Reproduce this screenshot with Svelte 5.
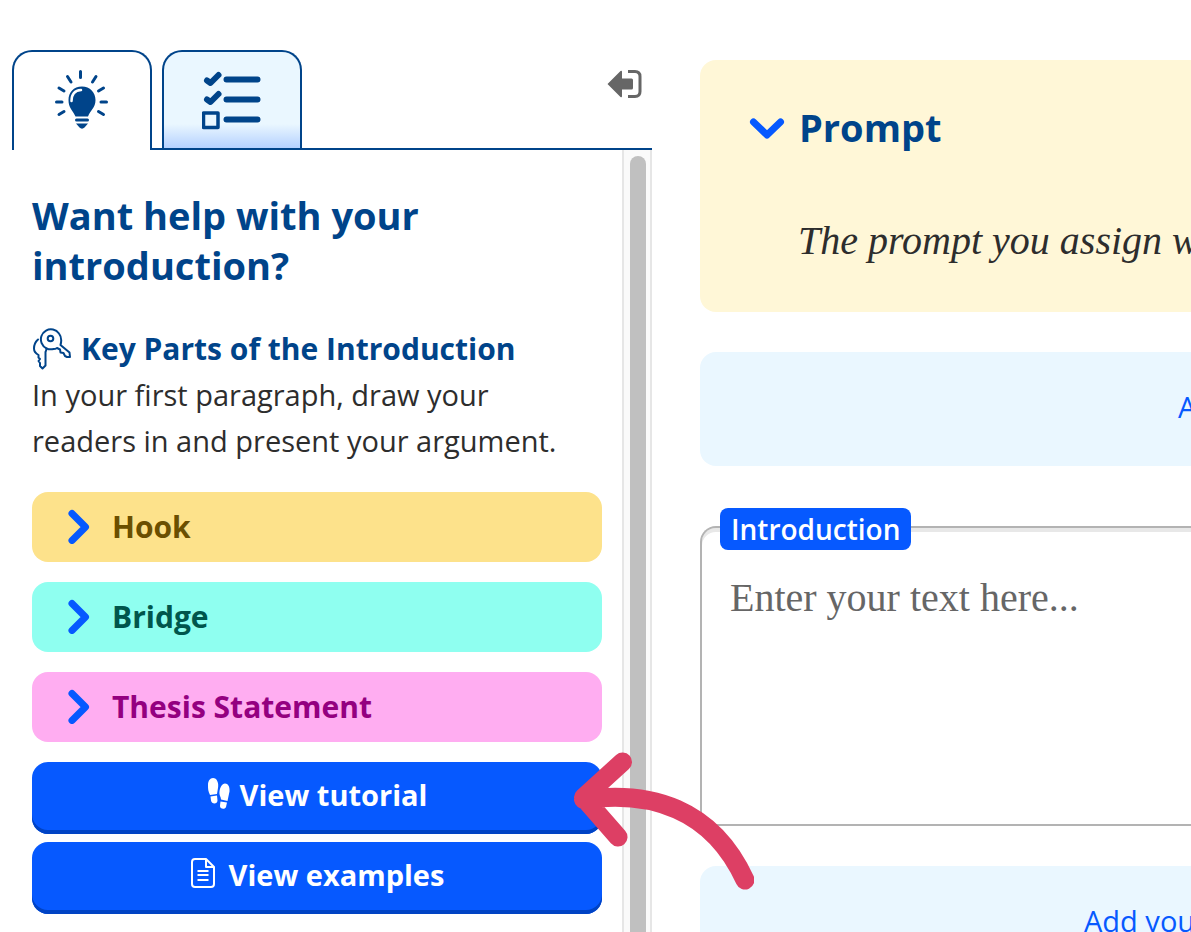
<script>
    let activeTab = $state("help");
    let text = $state("");

    // the key parts listed in the help tab
    const parts = [
        { name: "Hook", color: "hook" },
        { name: "Bridge", color: "bridge" },
        { name: "Thesis Statement", color: "thesis" },
    ];
</script>

<div class="page">
    <aside class="sidebar">
        <div class="tabs">
            <button class="tab" class:active={activeTab === "help"} aria-label="Help" onclick={() => (activeTab = "help")}>
                <svg width="56" height="62" viewBox="0 0 56 62" fill="none" stroke="#00448a" stroke-width="3" stroke-linecap="round">
                    <path d="M26.500 1.500v6M13.500 6.500l3.500 5.500M42 6.500l-3.500 5.500M5 18l5 3M49.500 18l-5 3M2.500 32h5.500M47 32h5.500M5 44.500l5-3M49.500 44.500l-5-3" />
                    <path d="M28 16.500c-8.500 0-13.500 6-13.500 13.500 0 8 4 10 7 16.500h12.500c2.500-6.500 7.500-8.500 7.500-16.500 0-7.500-5.500-13.500-13.500-13.500z" fill="#00448a" stroke="none" />
                    <path d="M17.500 31c0-6.500 3-10.500 9.500-11" stroke="#fff" stroke-width="2.500" />
                    <path d="M22.500 50h11" />
                    <path d="M22 53.500h12l-3.500 4c-1.500 1.500-3.500 1.500-5 0z" fill="#00448a" stroke="none" />
                </svg>
            </button>
            <div class="tabs-rest">
                <button class="tab" class:active={activeTab === "checklist"} aria-label="Checklist" onclick={() => (activeTab = "checklist")}>
                    <svg width="60" height="60" viewBox="0 0 60 60" fill="none" stroke="#00448a" stroke-width="6" stroke-linecap="round">
                        <path d="M24.500 9.500h31M24.500 29.500h31M24.500 49.500h31" />
                        <path d="M5 10.500l3.500 2.500 8-8M5 29.500l3.500 2.500 8-8" stroke-linejoin="round" />
                        <rect x="1.500" y="43" width="14.500" height="14.500" stroke-width="3.500" stroke-linejoin="round" />
                    </svg>
                </button>
                <button class="collapse" aria-label="Close sidebar">
                    <svg width="36" height="30" viewBox="0 0 36 30">
                        <path d="M0.500 15L13.500 2Q15 1 15 3V9.500h9.500q1.500 0 1.500 1.500v8q0 1.500-1.500 1.500H15V27q0 2-1.500 1z" fill="#666" />
                        <path d="M21 2.500h7q5 0 5 5v15q0 5-5 5h-7" fill="none" stroke="#666" stroke-width="3" />
                    </svg>
                </button>
            </div>
        </div>

        <div class="panel">
            <div class="help">
                <h1>Want help with your introduction?</h1>
                <h2>
                    <svg width="40" height="42" viewBox="0 0 40 42" fill="none" stroke="#00448a" stroke-width="2" stroke-linejoin="round" stroke-linecap="round">
                        <path d="M28.500 17q2-7-1.500-11.500a10 10 0 1 0-5.500 15.500q2 0 3.500-1l3 1.500.5 3 3 .5 1.500 3 2 1h3l-.5-4.500z" />
                        <circle cx="18.500" cy="10.500" r="2.800" />
                        <path d="M6 11.500q-4 3.500-4 9 0 4 4.500 6.500v2.500l1.500 1.500-1.500 2 1.500 2v3l2.500 2.500 3-3V24q1-2 1-3.500" />
                    </svg>
                    Key Parts of the Introduction
                </h2>
                <p>In your first paragraph, draw your readers in and present your argument.</p>

                <div class="parts">
                    {#each parts as part}
                        <button class="part {part.color}">
                            <svg width="24" height="36" viewBox="0 0 24 36" fill="none" stroke="#0659ff" stroke-width="7" stroke-linecap="round" stroke-linejoin="round">
                                <path d="M4 5.500L17.500 19 4 32.500" />
                            </svg>
                            {part.name}
                        </button>
                    {/each}
                </div>

                <div class="actions">
                    <button class="action">
                        <svg width="24" height="32" viewBox="0 0 24 32" fill="#fff">
                            <path d="M6 0c4 0 6 5 5 10l-1 6-7 1C1 13 1 11 1 7c0-4 2-7 5-7zM3.500 18.500l6.500-1 .5 5c0 4-6 4-6.500 0zM18 5.500c3 0 5 3 4.500 8L20.500 23 14 21.500c0-3-2-4-1.500-8 .5-4 2.500-8 5.500-8zM13.500 23.500l6.500 1-1 4.500c-1 3-6.500 2-6-1.500z" />
                        </svg>
                        View tutorial
                    </button>
                    <button class="action">
                        <svg class="doc" width="26" height="32" viewBox="0 0 26 32" fill="none" stroke="#fff" stroke-width="2">
                            <path d="M16 1H5Q2 1 2 4v22q0 3 3 3h16q3 0 3-3V9zM16 1v8h8M7.500 13h11M7.500 17h11M7.500 22h11" stroke-linejoin="round" />
                        </svg>
                        View examples
                    </button>
                </div>
            </div>
            <div class="scrollbar"><div class="thumb"></div></div>
        </div>
    </aside>

    <main>
        <section class="prompt">
            <h1>
                <svg width="36" height="24" viewBox="0 0 36 24" fill="none" stroke="#0659ff" stroke-width="7" stroke-linecap="round" stroke-linejoin="round">
                    <path d="M4.500 7L18 20 31.500 7" />
                </svg>
                Prompt
            </h1>
            <p>The prompt you assign will</p>
        </section>

        <button class="add late">Add</button>

        <div class="editor">
            <label for="introduction">Introduction</label>
            <textarea id="introduction" placeholder="Enter your text here..." bind:value={text}></textarea>
        </div>

        <button class="add">Add your</button>
    </main>

    <!-- pointer to the tutorial button -->
    <svg class="arrow" width="184" height="140" viewBox="0 0 184 140" fill="none" stroke="#dd3f64" stroke-width="19" stroke-linecap="round" stroke-linejoin="round">
        <path d="M52.500 12L13.500 47.500 48 87M13.500 49.500C80 40 142 58 175 130" />
    </svg>
</div>

<style>
    :global(body) {
        margin: 0;
        overflow: hidden;
        background: #fff;
    }

    .page {
        position: relative;
        display: flex;
        gap: 48px;
        height: 100vh;
        padding-left: 12px;
        box-sizing: border-box;
        overflow: hidden;
        font-family: "Open Sans", "Noto Sans", sans-serif;
        color: #2d2d2d;
    }

    button {
        font: inherit;
        border: 0;
        padding: 0;
        cursor: pointer;
    }

    h1,
    h2,
    p {
        margin: 0;
    }

    h1,
    h2 {
        color: #00448a;
        font-weight: 700;
    }

    svg {
        flex: none;
    }

    .sidebar {
        flex: 0 0 640px;
        display: flex;
        flex-direction: column;
        padding-top: 50px;
        box-sizing: border-box;
    }

    .tabs {
        display: flex;
        height: 100px;
    }

    .tabs-rest {
        flex: 1;
        display: flex;
        justify-content: space-between;
        padding-left: 10px;
        border-bottom: 2px solid #00448a;
    }

    .tab {
        width: 140px;
        box-sizing: border-box;
        display: flex;
        align-items: center;
        justify-content: center;
        border: 2px solid #00448a;
        border-bottom: 0;
        border-radius: 20px 20px 0 0;
        background: linear-gradient(#eaf7ff 75%, #b5d1ff);
    }

    .tab.active {
        background: #fff;
    }

    .collapse {
        align-self: center;
        width: 36px;
        height: 30px;
        margin: 0 9px 30px 0;
        background: none;
    }

    .collapse svg {
        display: block;
    }

    .panel {
        flex: 1;
        min-height: 0;
        display: flex;
    }

    .help {
        flex: 1;
        padding: 40px 20px 0;
        overflow: hidden;
    }

    .help h1 {
        font-size: 38px;
        line-height: 50px;
    }

    .help h2 {
        display: flex;
        align-items: center;
        gap: 9px;
        margin-top: 36px;
        font-size: 30px;
        line-height: 46px;
        white-space: nowrap;
    }

    .help p {
        padding-right: 20px;
        font-size: 29px;
        line-height: 46px;
    }

    .parts {
        display: flex;
        flex-direction: column;
        gap: 20px;
        margin-top: 28px;
    }

    .part {
        display: flex;
        align-items: center;
        gap: 20px;
        height: 70px;
        padding: 0 0 2px 36px;
        border-radius: 16px;
        font-size: 30px;
        font-weight: 700;
    }

    .hook {
        background: #fde28b;
        color: #6b4f00;
    }

    .bridge {
        background: #8ffff0;
        color: #00564c;
    }

    .thesis {
        background: #ffadf1;
        color: #940080;
    }

    .actions {
        display: flex;
        flex-direction: column;
        gap: 8px;
        margin-top: 20px;
    }

    .action {
        display: flex;
        align-items: center;
        justify-content: center;
        gap: 9px;
        height: 72px;
        padding-bottom: 8px;
        border-radius: 16px;
        background: #0659ff;
        box-shadow: inset 0 -4px #0043c4;
        color: #fff;
        font-size: 29px;
        font-weight: 700;
    }

    .doc {
        margin-right: 4px;
    }

    .scrollbar {
        flex: 0 0 30px;
        box-sizing: border-box;
        padding: 6px 4px 0 6px;
        border: solid #e6e6e6;
        border-width: 0 2px;
        background: #fafafa;
    }

    .thumb {
        height: 100%;
        border-radius: 8px 8px 0 0;
        background: #c0c0c0;
    }

    main {
        flex: 1;
        min-width: 0;
        display: flex;
        flex-direction: column;
        padding-top: 60px;
        white-space: nowrap;
    }

    .prompt {
        flex: none;
        height: 252px;
        box-sizing: border-box;
        padding: 42px 0 0 49px;
        border-radius: 16px 0 0 16px;
        background: #fff7d7;
        overflow: hidden;
    }

    .prompt h1 {
        display: flex;
        align-items: center;
        gap: 14px;
        font-size: 38px;
        line-height: 50px;
    }

    .prompt p {
        margin-top: 64px;
        padding-left: 49px;
        font: italic 40px/50px "Liberation Serif", serif;
    }

    .add {
        flex: none;
        height: 114px;
        margin-top: 40px;
        padding: 0 0 6px 384px;
        border-radius: 16px 0 0 16px;
        background: #eaf7ff;
        color: #0659ff;
        font-size: 29px;
        text-align: left;
        overflow: hidden;
    }

    .add.late {
        padding-left: 478px;
    }

    .editor {
        position: relative;
        flex: none;
        margin-top: 60px;
    }

    .editor label {
        position: absolute;
        top: -18px;
        left: 20px;
        padding: 0 11px;
        border-radius: 8px;
        background: #0659ff;
        color: #fff;
        font-size: 28px;
        font-weight: 600;
        line-height: 42px;
    }

    textarea {
        display: block;
        width: 100%;
        height: 300px;
        box-sizing: border-box;
        padding: 45px 0 0 28px;
        border: 2px solid #b3b3b3;
        border-right: 0;
        border-radius: 16px 0 0 0;
        box-shadow: inset 0 4px #e8e8e8;
        font: 40px/50px "Liberation Serif", serif;
        resize: none;
        outline: none;
    }

    textarea::placeholder {
        color: #666;
        opacity: 1;
    }

    .arrow {
        position: absolute;
        top: 750px;
        left: 570px;
        pointer-events: none;
    }
</style>
